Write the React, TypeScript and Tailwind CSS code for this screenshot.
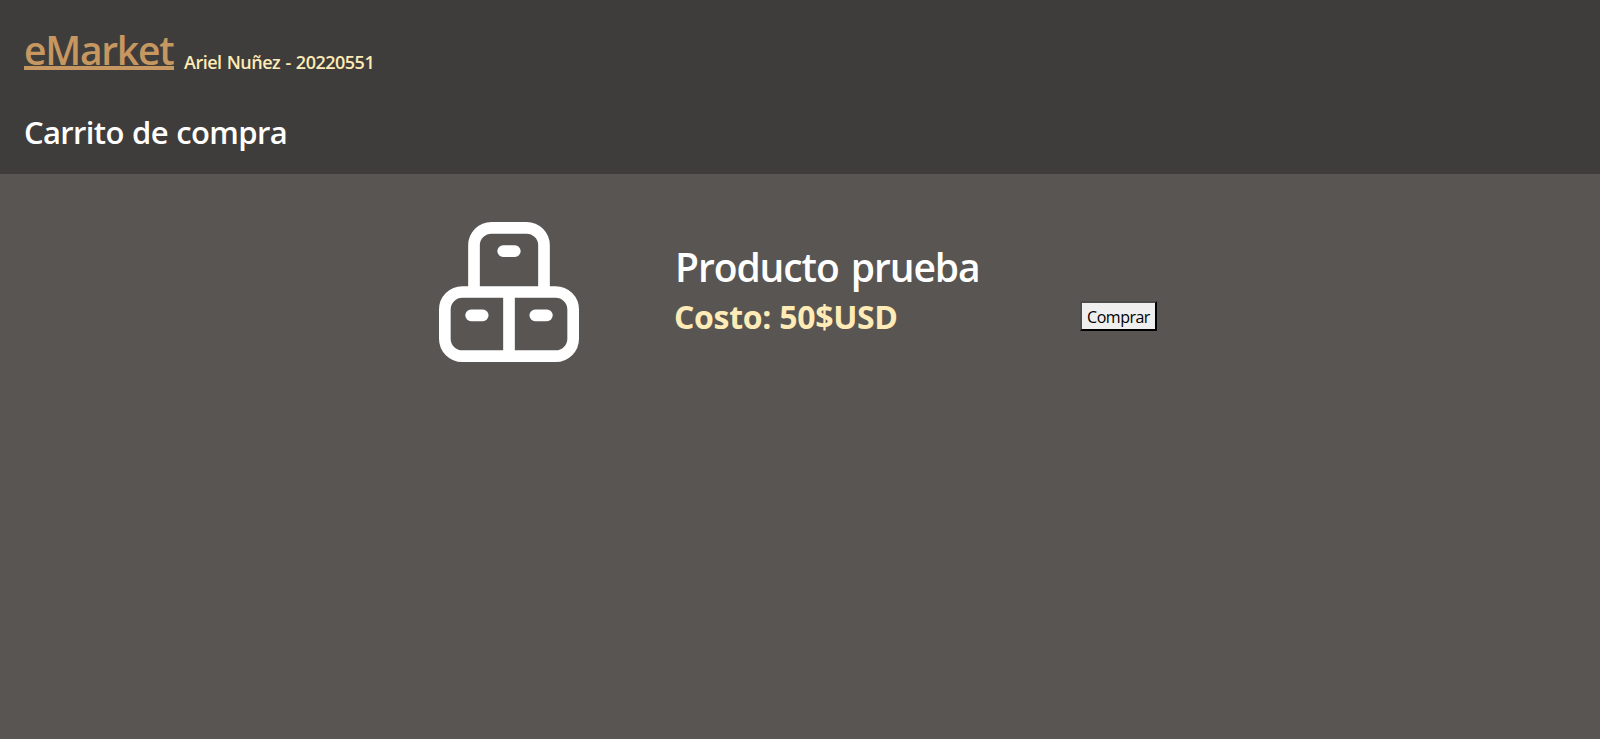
function BoxesIcon() {
  return (
    <svg className="size-[140px] shrink-0" viewBox="0 0 12 12" fill="none" stroke="white" strokeWidth="1">
      <rect x="0.5" y="6" width="11" height="5.5" rx="1.5" />
      <path d="M3 6V2A1.5 1.5 0 0 1 4.5 0.5H7.5A1.5 1.5 0 0 1 9 2V6M6 6V11.5" />
      <path d="M5.5 2.5H6.5M2.75 8H3.75M8.25 8H9.25" strokeLinecap="round" />
    </svg>
  );
}

export default function App() {
  return (
    <div className="flex min-h-screen flex-col bg-[#595552] font-['Open_Sans',sans-serif] text-white">
      <header className="flex h-[174px] flex-col bg-[#3f3d3b] px-6 pt-6">
        <div className="flex h-[60px] items-start">
          <a href="#" className="w-[150px] whitespace-nowrap bg-[linear-gradient(#c69760,#c69760)] bg-[length:100%_4px] bg-[position:0_42px] bg-no-repeat text-[39px] leading-[52px] font-semibold tracking-[-1.25px] text-[#c69760]">
            eMarket
          </a>
          <span className="ml-[10px] pt-[26px] text-[18px] leading-6 font-semibold tracking-[-0.5px] [word-spacing:1px] whitespace-nowrap text-[#feebb6]">
            Ariel Nuñez - 20220551
          </span>
        </div>
        <h1 className="mt-[26px] text-[31px] leading-[44px] font-semibold tracking-[-0.65px] [word-spacing:1px]">Carrito de compra</h1>
      </header>
      <main className="flex items-center pt-12 pl-[439px]">
        <BoxesIcon />
        <div className="ml-[95px] w-[406px]">
          <h2 className="pl-px text-[39px] leading-[50px] font-semibold tracking-[-1.07px] [word-spacing:3px] whitespace-nowrap">Producto prueba</h2>
          <p className="text-[32px] leading-[50px] font-bold tracking-[-0.3px] whitespace-nowrap text-[#feebb6]">Costo: 50$USD</p>
        </div>
        <button className="mt-12 flex h-[30px] w-[77px] items-center justify-center border-2 border-t-[#4c4c4c] border-r-black border-b-black border-l-[#4c4c4c] bg-[#efefef] pt-px text-[16px] leading-6 tracking-[-0.5px] text-black">
          Comprar
        </button>
      </main>
    </div>
  );
}
